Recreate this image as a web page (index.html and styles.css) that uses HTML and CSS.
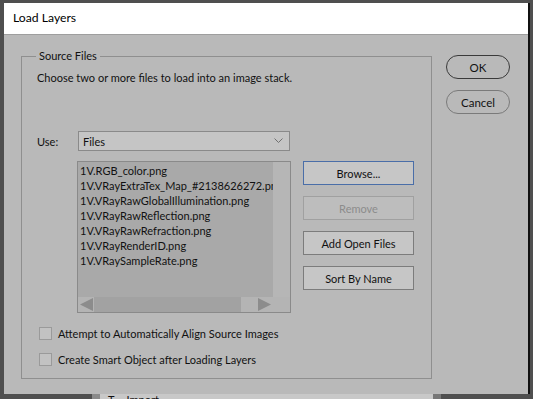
FILE: index.html
```html
<!DOCTYPE html>
<html>
<head>
<meta charset="utf-8">
<link rel="stylesheet" href="styles.css">
</head>
<body>
<div class="window">
  <div class="titlebar">Load Layers</div>
  <div class="content">
    <fieldset class="group">
      <legend class="legend">Source Files</legend>
      <div class="group-inner">
        <div class="desc">Choose two or more files to load into an image stack.</div>
        <div class="use-row">
          <span class="use-label">Use:</span>
          <div class="select">
            <span>Files</span>
            <svg class="chev" width="9" height="6" viewBox="0 0 9 6"><path d="M0.5 0.5 L4.5 4.5 L8.5 0.5" fill="none" stroke="#707070" stroke-width="1"/></svg>
          </div>
        </div>
        <div class="list-row">
          <div class="listbox">
            <div class="list-main">
              <div class="items">
                <div class="item">1V.RGB_color.png</div>
                <div class="item">1V.VRayExtraTex_Map_#2138626272.png</div>
                <div class="item">1V.VRayRawGlobalIllumination.png</div>
                <div class="item">1V.VRayRawReflection.png</div>
                <div class="item">1V.VRayRawRefraction.png</div>
                <div class="item">1V.VRayRenderID.png</div>
                <div class="item">1V.VRaySampleRate.png</div>
              </div>
              <div class="vtrack"></div>
            </div>
            <div class="hscroll">
              <svg class="arrow" width="16" height="15" viewBox="0 0 16 15"><path d="M2 7.5 L15 1 L15 14 Z" fill="#8c8c8c"/></svg>
              <div class="thumb"></div>
              <div class="track-gap"></div>
              <svg class="arrow" width="16" height="15" viewBox="0 0 16 15"><path d="M14 7.5 L1 1 L1 14 Z" fill="#8c8c8c"/></svg>
              <div class="corner"></div>
            </div>
          </div>
          <div class="side-buttons">
            <div class="btn focused">Browse...</div>
            <div class="btn disabled">Remove</div>
            <div class="btn">Add Open Files</div>
            <div class="btn">Sort By Name</div>
          </div>
        </div>
        <div class="check-row first"><span class="box"></span><span>Attempt to Automatically Align Source Images</span></div>
        <div class="check-row"><span class="box"></span><span>Create Smart Object after Loading Layers</span></div>
      </div>
    </fieldset>
    <div class="main-buttons">
      <div class="pill">OK</div>
      <div class="pill cancel">Cancel</div>
    </div>
  </div>
</div>
<div class="under">
  <div class="under-dark"></div>
  <div class="under-light"><span class="under-icon">T</span><span class="under-text">Import</span></div>
  <div class="under-mid"></div>
</div>
</body>
</html>
```
FILE: styles.css
```css
* { box-sizing: border-box; }
html, body { margin: 0; padding: 0; }
body {
  width: 533px;
  height: 399px;
  overflow: hidden;
  background: #4f4f4f;
  font-family: Lato, "Noto Sans", sans-serif;
  font-size: 11px;
  color: #111;
  padding-top: 3px;
}
.window {
  margin-left: 4px;
  width: 526px;
  height: 391px;
  background: #b9b9b9;
  border-right: 2px solid #111;
  display: flex;
  flex-direction: column;
}
.titlebar {
  height: 32px;
  background: #fff;
  border-bottom: 1px solid #9e9e9e;
  font-size: 12.2px;
  padding-left: 9px;
  line-height: 30px;
  color: #000;
}
.content {
  display: flex;
  padding: 14px 0 0 17px;
}
.group {
  margin: 0;
  padding: 0;
  width: 411px;
  height: 330px;
  border: 1px solid #8f8f8f;
  min-width: 0;
}
.legend {
  margin-left: 14px;
  padding: 0 3px;
  line-height: 14px;
}
.group-inner {
  padding: 0 0 0 15px;
}
.desc {
  line-height: 16px;
  margin-top: 7px;
}
.use-row {
  display: flex;
  align-items: center;
  margin-top: 45px;
  height: 20px;
}
.use-label { width: 41px; }
.select {
  width: 212px;
  height: 20px;
  background: #c5c5c5;
  border: 1px solid #8a8a8a;
  display: flex;
  align-items: center;
  justify-content: space-between;
  padding: 0 6px 0 4px;
}
.chev { display: block; }
.list-row {
  display: flex;
  margin-top: 10px;
  margin-left: 40px;
}
.listbox {
  width: 214px;
  height: 152px;
  border: 1px solid #8a8a8a;
  background: #b6b6b6;
  display: flex;
  flex-direction: column;
}
.list-main {
  flex: 1;
  display: flex;
  min-height: 0;
}
.items {
  width: 195px;
  background: #a9a9a9;
  padding: 1px 0 0 2px;
  overflow: hidden;
  white-space: nowrap;
}
.item { line-height: 15px; height: 15px; }
.vtrack { flex: 1; background: #b6b6b6; }
.hscroll {
  height: 15px;
  display: flex;
  background: #b4b4b4;
}
.arrow { display: block; flex: none; }
.thumb { width: 147px; background: #a2a2a2; }
.track-gap { width: 16px; }
.corner { flex: 1; }
.side-buttons {
  margin-left: 12px;
  display: flex;
  flex-direction: column;
  gap: 11px;
}
.btn {
  width: 111px;
  height: 24px;
  background: #c6c6c6;
  border: 1px solid #7c7c7c;
  display: flex;
  align-items: center;
  justify-content: center;
  color: #111;
}
.btn.focused { border-color: #4a6ea8; }
.btn.disabled { background: #bdbdbd; border-color: #a0a0a0; color: #8c8c8c; }
.check-row {
  display: flex;
  align-items: center;
  height: 14px;
  margin-left: 2px;
  gap: 6px;
}
.check-row.first { margin-top: 13px; }
.check-row + .check-row { margin-top: 12px; }
.box {
  width: 13px;
  height: 13px;
  border: 1px solid #9a9a9a;
  background: #c2c2c2;
  flex: none;
}
.main-buttons {
  margin-left: 14px;
  margin-top: 6px;
  display: flex;
  flex-direction: column;
  gap: 11px;
}
.pill {
  width: 64px;
  height: 24px;
  border: 1px solid #3a3a3a;
  border-radius: 12px;
  display: flex;
  align-items: center;
  justify-content: center;
  font-size: 11.5px;
  color: #111;
}
.pill.cancel { border-color: #7a7a7a; }
.under {
  display: flex;
  height: 5px;
  overflow: hidden;
}
.under-dark { width: 92px; background: #4f4f4f; }
.under-light {
  width: 341px;
  background: #c8c8c8;
  border-left: 8px solid #8a8a8a;
  font-size: 11px;
  line-height: 11px;
}
.under-icon { margin-left: 8px; }
.under-text { margin-left: 12px; }
.under-mid { width: 8px; background: #777; }
```
